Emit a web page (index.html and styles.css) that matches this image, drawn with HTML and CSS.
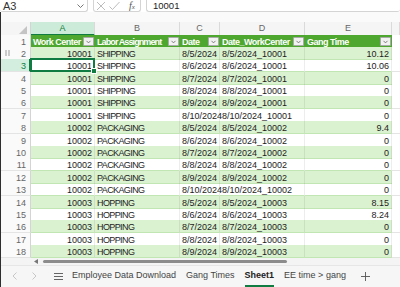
FILE: index.html
```html
<!DOCTYPE html>
<html>
<head>
    <title>Sheet1</title>
    <link rel="stylesheet" href="styles.css">
</head>
<body>
    <div class="formula-bar">
        <div class="name-box">
            <span>A3</span>
            <svg class="chev" width="7" height="4" viewBox="0 0 7 4"><polyline points="0.5,0.5 3.5,3.5 6.5,0.5" fill="none" stroke="#666" stroke-width="0.9"/></svg>
        </div>
        <div class="fx-box">
            <svg width="10" height="10" viewBox="0 0 10 10"><path d="M1 1 L9 9 M9 1 L1 9" stroke="#b5b5b5" stroke-width="0.9"/></svg>
            <svg width="11" height="10" viewBox="0 0 11 10"><polyline points="0.5,5.5 3.5,8.5 10.5,1" fill="none" stroke="#b5b5b5" stroke-width="0.9"/></svg>
            <span class="fx">f<span class="fx-x">x</span></span>
        </div>
        <div class="formula-box">10001</div>
    </div>

    <div class="workbook">
        <div class="gap"></div>

        <div class="row letters">
            <div class="corner"><svg width="8" height="8" viewBox="0 0 8 8"><polygon points="8,0 8,8 0,8" fill="#c4c4c4"/></svg></div>
            <div class="col-letter active">A</div>
            <div class="col-letter">B</div>
            <div class="col-letter">C</div>
            <div class="col-letter">D</div>
            <div class="col-letter">E</div>
            <div class="col-letter"></div>
        </div>

        <div class="row">
            <div class="rn">1</div>
            <div class="th"><span>Work Center</span><i class="fb"></i></div>
            <div class="th"><span class="tight">Labor Assignment</span><i class="fb"></i></div>
            <div class="th"><span>Date</span><i class="fb"></i></div>
            <div class="th"><span>Date_WorkCenter</span><i class="fb"></i></div>
            <div class="th"><span>Gang Time</span><i class="fb"></i></div>
            <div class="c blank"></div>
        </div>

        <div class="row band">
            <div class="rn">
                <svg class="grip" width="5" height="6" viewBox="0 0 5 6"><g fill="#777"><circle cx="1" cy="1" r="0.7"/><circle cx="4" cy="1" r="0.7"/><circle cx="1" cy="3" r="0.7"/><circle cx="4" cy="3" r="0.7"/><circle cx="1" cy="5" r="0.7"/><circle cx="4" cy="5" r="0.7"/></g></svg>2
            </div>
            <div class="c num">10001</div><div class="c txt">SHIPPING</div><div class="c">8/5/2024</div><div class="c">8/5/2024_10001</div><div class="c num">10.12</div><div class="c blank"></div>
        </div>
        <div class="row">
            <div class="rn active">3</div>
            <div class="c num sel">10001</div><div class="c txt">SHIPPING</div><div class="c">8/6/2024</div><div class="c">8/6/2024_10001</div><div class="c num">10.06</div><div class="c blank"></div>
        </div>
        <div class="row band">
            <div class="rn">4</div>
            <div class="c num">10001</div><div class="c txt">SHIPPING</div><div class="c">8/7/2024</div><div class="c">8/7/2024_10001</div><div class="c num">0</div><div class="c blank"></div>
        </div>
        <div class="row">
            <div class="rn">5</div>
            <div class="c num">10001</div><div class="c txt">SHIPPING</div><div class="c">8/8/2024</div><div class="c">8/8/2024_10001</div><div class="c num">0</div><div class="c blank"></div>
        </div>
        <div class="row band">
            <div class="rn">6</div>
            <div class="c num">10001</div><div class="c txt">SHIPPING</div><div class="c">8/9/2024</div><div class="c">8/9/2024_10001</div><div class="c num">0</div><div class="c blank"></div>
        </div>
        <div class="row">
            <div class="rn">7</div>
            <div class="c num">10001</div><div class="c txt">SHIPPING</div><div class="c">8/10/2024</div><div class="c">8/10/2024_10001</div><div class="c num">0</div><div class="c blank"></div>
        </div>
        <div class="row band">
            <div class="rn">8</div>
            <div class="c num">10002</div><div class="c txt">PACKAGING</div><div class="c">8/5/2024</div><div class="c">8/5/2024_10002</div><div class="c num">9.4</div><div class="c blank"></div>
        </div>
        <div class="row">
            <div class="rn">9</div>
            <div class="c num">10002</div><div class="c txt">PACKAGING</div><div class="c">8/6/2024</div><div class="c">8/6/2024_10002</div><div class="c num">0</div><div class="c blank"></div>
        </div>
        <div class="row band">
            <div class="rn">10</div>
            <div class="c num">10002</div><div class="c txt">PACKAGING</div><div class="c">8/7/2024</div><div class="c">8/7/2024_10002</div><div class="c num">0</div><div class="c blank"></div>
        </div>
        <div class="row">
            <div class="rn">11</div>
            <div class="c num">10002</div><div class="c txt">PACKAGING</div><div class="c">8/8/2024</div><div class="c">8/8/2024_10002</div><div class="c num">0</div><div class="c blank"></div>
        </div>
        <div class="row band">
            <div class="rn">12</div>
            <div class="c num">10002</div><div class="c txt">PACKAGING</div><div class="c">8/9/2024</div><div class="c">8/9/2024_10002</div><div class="c num">0</div><div class="c blank"></div>
        </div>
        <div class="row">
            <div class="rn">13</div>
            <div class="c num">10002</div><div class="c txt">PACKAGING</div><div class="c">8/10/2024</div><div class="c">8/10/2024_10002</div><div class="c num">0</div><div class="c blank"></div>
        </div>
        <div class="row band">
            <div class="rn">14</div>
            <div class="c num">10003</div><div class="c txt">HOPPING</div><div class="c">8/5/2024</div><div class="c">8/5/2024_10003</div><div class="c num">8.15</div><div class="c blank"></div>
        </div>
        <div class="row">
            <div class="rn">15</div>
            <div class="c num">10003</div><div class="c txt">HOPPING</div><div class="c">8/6/2024</div><div class="c">8/6/2024_10003</div><div class="c num">8.24</div><div class="c blank"></div>
        </div>
        <div class="row band">
            <div class="rn">16</div>
            <div class="c num">10003</div><div class="c txt">HOPPING</div><div class="c">8/7/2024</div><div class="c">8/7/2024_10003</div><div class="c num">0</div><div class="c blank"></div>
        </div>
        <div class="row">
            <div class="rn">17</div>
            <div class="c num">10003</div><div class="c txt">HOPPING</div><div class="c">8/8/2024</div><div class="c">8/8/2024_10003</div><div class="c num">0</div><div class="c blank"></div>
        </div>
        <div class="row band">
            <div class="rn">18</div>
            <div class="c num">10003</div><div class="c txt">HOPPING</div><div class="c">8/9/2024</div><div class="c">8/9/2024_10003</div><div class="c num">0</div><div class="c blank"></div>
        </div>

        <!-- horizontal scroll -->
        <div class="hscroll">
            <svg class="scroll-arrow" width="4" height="5" viewBox="0 0 4 5"><polygon points="4,0 4,5 0,2.5" fill="#777"/></svg>
            <div class="thumb"></div>
        </div>

        <!-- sheet tabs -->
        <div class="tabs">
            <svg class="nav" width="5" height="8" viewBox="0 0 5 8"><polyline points="4.5,0.5 1,4 4.5,7.5" fill="none" stroke="#c2c2c2" stroke-width="0.9"/></svg>
            <svg class="nav" width="5" height="8" viewBox="0 0 5 8"><polyline points="0.5,0.5 4,4 0.5,7.5" fill="none" stroke="#c2c2c2" stroke-width="0.9"/></svg>
            <svg class="menu" width="9" height="7" viewBox="0 0 9 7"><path d="M0 0.5 H9 M0 3.5 H9 M0 6.5 H9" stroke="#555" stroke-width="0.9"/></svg>
            <span class="tab">Employee Data Download</span>
            <span class="tab">Gang Times</span>
            <span class="tab current">Sheet1</span>
            <span class="tab">EE time &gt; gang</span>
            <svg class="plus" width="9" height="9" viewBox="0 0 9 9"><path d="M4.5 0 V9 M0 4.5 H9" stroke="#555" stroke-width="0.9"/></svg>
        </div>
    </div>
</body>
</html>
```

FILE: styles.css
```css
body {
    margin: 0;
    width: 400px;
    height: 287px;
    overflow: hidden;
    background-color: #fff;
    font-family: 'Liberation Sans', Arial, sans-serif;
    color: #222;
}

/* Formula bar */
.formula-bar {
    display: flex;
    height: 12px;
    gap: 5px;
}

.name-box,
.fx-box,
.formula-box {
    box-sizing: border-box;
    height: 12px;
    border: 1px solid #d4d4d4;
    border-top: none;
    border-radius: 0 0 3px 3px;
    display: flex;
    align-items: center;
}

.name-box {
    width: 88px;
    border-left: none;
    padding-left: 3px;
    font-size: 11px;
    color: #333;
}

.name-box span {
    flex: 1;
}

.chev {
    margin-right: 3px;
}

.fx-box {
    width: 48px;
    padding-left: 2px;
    gap: 3px;
}

.fx {
    font-family: 'Liberation Serif', serif;
    font-style: italic;
    font-size: 10px;
    color: #555;
    margin-left: 6px;
    line-height: 11px;
    display: flex;
    align-items: flex-start;
}

.fx-x {
    font-size: 7px;
    line-height: 7px;
    margin-top: 4px;
}

.formula-box {
    flex: 1;
    border-right: none;
    padding-left: 6px;
    font-size: 9.5px;
    color: #222;
}

/* Grid */
.workbook {
    border-left: 1px solid #2e2e2e;
}

.gap {
    height: 10px;
    background-color: #fafafa;
}

.row {
    display: grid;
    grid-template-columns: 30px 64px 85px 40px 85px 87px 8px;
    height: 12.4px;
    font-size: 9px;
}

.letters {
    height: 12.5px;
    background-color: #f5f5f5;
}

.corner {
    box-sizing: border-box;
    border-right: 1px solid #d4d4d4;
    border-bottom: 1px solid #d4d4d4;
    display: flex;
    justify-content: flex-end;
    align-items: flex-end;
    padding: 0 3px 1.5px 0;
}

.col-letter {
    box-sizing: border-box;
    text-align: center;
    color: #666;
    line-height: 11px;
    padding-top: 1px;
    border-right: 1px solid #dadada;
    border-bottom: 1px solid #d4d4d4;
}

.col-letter.active {
    background-color: #cdebd9;
    color: #107c41;
    border-bottom: 2px solid #107c41;
}

.rn {
    position: relative;
    box-sizing: border-box;
    text-align: right;
    padding: 2px 4px 0 0;
    line-height: 10px;
    color: #666;
    background-color: #fafafa;
    border-right: 1px solid #d4d4d4;
    border-bottom: 1px solid #e4e4e4;
}

.rn.active {
    background-color: #d3eede;
    color: #107c41;
    border-right: 2px solid #107c41;
    padding-right: 3px;
}

.grip {
    position: absolute;
    left: 4px;
    top: 3px;
}

.th {
    display: flex;
    align-items: center;
    background-color: #4ea72e;
    color: #fff;
    font-weight: bold;
    letter-spacing: -0.5px;
    overflow: hidden;
}

.th span {
    flex: 1;
    white-space: nowrap;
    overflow: hidden;
    padding: 2px 0 0 2px;
    line-height: 10px;
}

.th .tight {
    letter-spacing: -0.9px;
}

.fb {
    flex: none;
    box-sizing: border-box;
    width: 11px;
    height: 9.5px;
    margin: 1px 1px 0 1px;
    background-color: #f2f2f2;
    border: 1px solid #a9a9a9;
    border-radius: 1px;
    background-image: url("data:image/svg+xml,%3Csvg xmlns='http://www.w3.org/2000/svg' width='9' height='8'%3E%3Cpolyline points='2.5,3 4.5,5 6.5,3' fill='none' stroke='%23666' stroke-width='0.8'/%3E%3C/svg%3E");
    background-repeat: no-repeat;
    background-position: center;
}

.c {
    box-sizing: border-box;
    padding: 2px 2px 0;
    line-height: 10px;
    white-space: nowrap;
    overflow: hidden;
    border-right: 1px solid rgba(0, 0, 0, 0.07);
    border-bottom: 1px solid #c2e6b3;
    color: #1d1d1d;
}

.c:nth-child(4) {
    overflow: visible;
}

.band .c {
    background-color: #daf2d0;
}

.c.blank {
    background-color: #fff !important;
    border-bottom-color: #e4e4e4;
    border-right: none;
}

.num {
    text-align: right;
}

.txt {
    letter-spacing: -0.6px;
}

.sel {
    position: relative;
    overflow: visible;
}

.sel::after {
    content: '';
    position: absolute;
    left: -1px;
    top: -1.5px;
    right: -1px;
    bottom: -1px;
    border: 2px solid #107c41;
}

.sel::before {
    content: '';
    position: absolute;
    right: -2.5px;
    bottom: -2.5px;
    width: 4px;
    height: 4px;
    background-color: #107c41;
    border: 1px solid #fff;
    z-index: 1;
}

/* Scroll bar */
.hscroll {
    height: 7.3px;
    display: flex;
    align-items: center;
    background-color: #f4f4f4;
    padding-left: 33px;
}

.scroll-arrow {
    margin-right: 5px;
}

.thumb {
    width: 244px;
    height: 3px;
    border-radius: 2px;
    background-color: #8c8c8c;
}

/* Sheet tabs */
.tabs {
    height: 22px;
    display: flex;
    align-items: center;
    background-color: #f6f6f6;
    border-top: 1px solid #e6e6e6;
    box-sizing: border-box;
    padding-left: 11px;
    font-size: 9px;
    color: #444;
}

.nav {
    margin-right: 15px;
}

.menu {
    margin-left: 2px;
    margin-right: 9px;
}

.tab {
    margin-right: 10px;
    height: 22px;
    line-height: 21px;
    box-sizing: border-box;
}

.tab.current {
    font-weight: bold;
    color: #222;
    border-bottom: 2px solid #107c41;
    margin-right: 10px;
}

.plus {
    margin-left: 5px;
}
```
